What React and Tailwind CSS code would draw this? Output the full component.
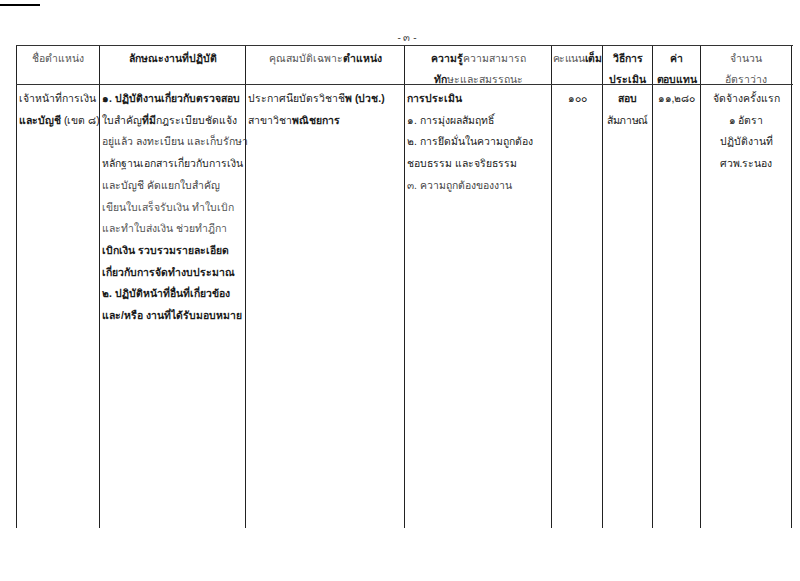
import React from "react";

const font = { fontFamily: '"Liberation Sans", "DejaVu Sans", sans-serif' };

const cols = [
  "w-[83px]",
  "w-[146px]",
  "w-[159px]",
  "w-[147px]",
  "w-[51px]",
  "w-[50px]",
  "w-[48px]",
  "w-[92px]",
];

const Cell = ({ i, className = "", children }) => (
  <div
    className={`${cols[i]} shrink-0 whitespace-nowrap overflow-visible border-l border-[#222] ${
      i === cols.length - 1 ? "border-r" : ""
    } ${className}`}
  >
    {children}
  </div>
);

const App = () => {
  return (
    <div
      className="relative w-[800px] h-[581px] bg-white text-[#1a1a1a] text-[10.4px] overflow-hidden"
      style={font}
    >
      {/* corner mark */}
      <div className="w-[40px] h-[2px] bg-black mt-[4px]"></div>

      {/* page number */}
      <div className="text-center text-[10px] text-[#444] mt-[26px] pl-[14px] leading-[12px]">
        - ๓ -
      </div>

      <div className="ml-[16px] mt-[1px] w-[777px]">
        {/* Header */}
        <div className="flex h-[40px] border-t border-b border-[#333] leading-[21px] text-center">
          <Cell i={0} className="pt-[2px] text-[#555]">
            ชื่อตำแหน่ง
          </Cell>
          <Cell i={1} className="pt-[2px] font-bold">
            ลักษณะงานที่ปฏิบัติ
          </Cell>
          <Cell i={2} className="pt-[2px] text-[#555]">
            คุณสมบัติเฉพาะ<span className="font-bold text-[#1a1a1a]">ตำแหน่ง</span>
          </Cell>
          <Cell i={3} className="pt-[2px] text-[#555]">
            <div>
              <span className="font-bold text-[#1a1a1a]">ความรู้</span>ความสามารถ
            </div>
            <div>
              <span className="font-bold text-[#1a1a1a]">ทัก</span>ษะและสมรรถนะ
            </div>
          </Cell>
          <Cell i={4} className="pt-[2px] text-[#555] tracking-[-0.4px]">
            คะแนน<span className="font-bold text-[#1a1a1a]">เต็ม</span>
          </Cell>
          <Cell i={5} className="pt-[2px] font-bold">
            <div>วิธีการ</div>
            <div>ประเมิน</div>
          </Cell>
          <Cell i={6} className="pt-[2px] font-bold tracking-[-0.2px]">
            <div>ค่า</div>
            <div>ตอบแทน</div>
          </Cell>
          <Cell i={7} className="pt-[2px] text-[#555]">
            <div>จำนวน</div>
            <div>อัตราว่าง</div>
          </Cell>
        </div>

        {/* Body */}
        <div className="flex h-[443px] leading-[21.7px]">
          <Cell i={0} className="pt-[3px] pl-[2px]">
            <div>เจ้าหน้าที่การเงิน</div>
            <div>
              <span className="font-bold">และบัญชี</span> (เขต ๘)
            </div>
          </Cell>
          <Cell i={1} className="pt-[3px] pl-[2px]">
            <div className="font-bold">๑. ปฏิบัติงานเกี่ยวกับตรวจสอบ</div>
            <div>
              ใบสำคัญ<span className="font-bold">ที่มี</span>กฎระเบียบชัดแจ้ง
            </div>
            <div className="text-[#444]">อยู่แล้ว ลงทะเบียน และเก็บรักษา</div>
            <div>หลักฐานเอกสารเกี่ยวกับการเงิน</div>
            <div className="text-[#444]">และบัญชี คัดแยกใบสำคัญ</div>
            <div className="text-[#555]">เขียนใบเสร็จรับเงิน ทำใบเบิก</div>
            <div className="text-[#555]">และทำใบส่งเงิน ช่วยทำฎีกา</div>
            <div className="font-bold">เบิกเงิน รวบรวมรายละเอียด</div>
            <div className="font-bold">เกี่ยวกับการจัดทำงบประมาณ</div>
            <div className="font-bold">๒. ปฏิบัติหน้าที่อื่นที่เกี่ยวข้อง</div>
            <div className="font-bold">และ/หรือ งานที่ได้รับมอบหมาย</div>
          </Cell>
          <Cell i={2} className="pt-[3px] pl-[2px]">
            <div>
              ประกาศนียบัตรวิชาชี<span className="font-bold">พ (ปวช.)</span>
            </div>
            <div>
              สาขาวิชา<span className="font-bold">พณิชยการ</span>
            </div>
          </Cell>
          <Cell i={3} className="pt-[3px] pl-[2px]">
            <div className="font-bold">การประเมิน</div>
            <div>๑. การมุ่งผลสัมฤทธิ์</div>
            <div>๒. การยึดมั่นในความถูกต้อง</div>
            <div>ชอบธรรม และจริยธรรม</div>
            <div className="text-[#444]">๓. ความถูกต้องของงาน</div>
          </Cell>
          <Cell i={4} className="pt-[3px] text-center">
            ๑๐๐
          </Cell>
          <Cell i={5} className="pt-[3px] text-center">
            <div className="font-bold">สอบ</div>
            <div className="tracking-[-0.3px]">สัมภาษณ์</div>
          </Cell>
          <Cell i={6} className="pt-[3px] text-center">
            ๑๑,๒๘๐
          </Cell>
          <Cell i={7} className="pt-[3px] text-center">
            <div>จัดจ้างครั้งแรก</div>
            <div>๑ อัตรา</div>
            <div>ปฏิบัติงานที่</div>
            <div>ศวพ.ระนอง</div>
          </Cell>
        </div>
      </div>
    </div>
  );
};

export default App;
